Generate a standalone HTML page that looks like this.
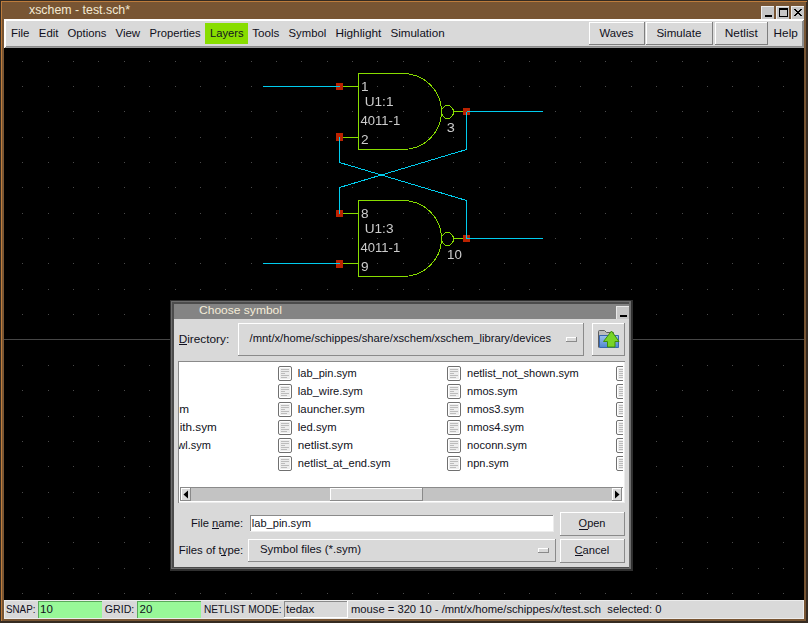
<!DOCTYPE html>
<html><head><meta charset="utf-8"><style>
html,body{margin:0;padding:0;background:#000;overflow:hidden}
svg{display:block}
text{font-family:"Liberation Sans",sans-serif;white-space:pre}
</style></head><body>
<svg width="808" height="623" viewBox="0 0 808 623">
<rect x="0" y="0" width="808" height="623" fill="#352b22" />
<rect x="1" y="1" width="806" height="620" fill="#bd7c3c" />
<rect x="2" y="2" width="804" height="619" fill="#785533" />
<rect x="806" y="2" width="2" height="621" fill="#352b22" />
<rect x="2" y="621" width="806" height="2" fill="#352b22" />
<text x="29" y="14" font-size="12.2" fill="#f3ead3" textLength="101" lengthAdjust="spacingAndGlyphs" >xschem - test.sch*</text>
<rect x="761" y="6" width="13" height="13" fill="#ececec" />
<rect x="762" y="7" width="12" height="12" fill="#c6c6c6" />
<rect x="776" y="6" width="13" height="13" fill="#ececec" />
<rect x="777" y="7" width="12" height="12" fill="#c6c6c6" />
<rect x="791" y="6" width="13" height="13" fill="#ececec" />
<rect x="792" y="7" width="12" height="12" fill="#c6c6c6" />
<rect x="765" y="15" width="7" height="2" fill="#000" />
<rect x="779" y="8" width="9" height="9" fill="#000" />
<rect x="780" y="10" width="7" height="6" fill="#c6c6c6" />
<path d="M794 9h2v1h-2zM800 9h2v1h-2zM795 10h2v1h-2zM799 10h2v1h-2zM796 11h2v1h-2zM798 11h2v1h-2zM797 12h2v1h-2zM796 13h2v1h-2zM798 13h2v1h-2zM795 14h2v1h-2zM799 14h2v1h-2zM794 15h2v1h-2zM800 15h2v1h-2z" fill="#000"/>
<rect x="4" y="19" width="800" height="29" fill="#8c8c8c" />
<path d="M4 19 H804 L802 21 H6 V46 L4 48 Z" fill="#ffffff" shape-rendering="crispEdges"/>
<rect x="6" y="21" width="796" height="25" fill="#d9d9d9" />
<rect x="6" y="47" width="798" height="1" fill="#9a9a9a" />
<rect x="205" y="23" width="43" height="21" fill="#88dd00" />
<rect x="589" y="22" width="56" height="23" fill="#7e7e7e" />
<rect x="589" y="22" width="55" height="22" fill="#ffffff" />
<rect x="590" y="23" width="54" height="21" fill="#d9d9d9" />
<rect x="646" y="22" width="67" height="23" fill="#7e7e7e" />
<rect x="646" y="22" width="66" height="22" fill="#ffffff" />
<rect x="647" y="23" width="65" height="21" fill="#d9d9d9" />
<rect x="715" y="22" width="53" height="23" fill="#7e7e7e" />
<rect x="715" y="22" width="52" height="22" fill="#ffffff" />
<rect x="716" y="23" width="51" height="21" fill="#d9d9d9" />
<text x="10.9" y="37" font-size="11.2" fill="#101020" textLength="18.5" lengthAdjust="spacingAndGlyphs" >File</text>
<text x="38.8" y="37" font-size="11.2" fill="#101020" textLength="19.7" lengthAdjust="spacingAndGlyphs" >Edit</text>
<text x="67.5" y="37" font-size="11.2" fill="#101020" textLength="38.9" lengthAdjust="spacingAndGlyphs" >Options</text>
<text x="115.4" y="37" font-size="11.2" fill="#101020" textLength="24.8" lengthAdjust="spacingAndGlyphs" >View</text>
<text x="149.6" y="37" font-size="11.2" fill="#101020" textLength="51.1" lengthAdjust="spacingAndGlyphs" >Properties</text>
<text x="210.0" y="37" font-size="11.2" fill="#101020" textLength="33.6" lengthAdjust="spacingAndGlyphs" >Layers</text>
<text x="252.2" y="37" font-size="11.2" fill="#101020" textLength="27.2" lengthAdjust="spacingAndGlyphs" >Tools</text>
<text x="288.6" y="37" font-size="11.2" fill="#101020" textLength="37.6" lengthAdjust="spacingAndGlyphs" >Symbol</text>
<text x="335.4" y="37" font-size="11.2" fill="#101020" textLength="45.9" lengthAdjust="spacingAndGlyphs" >Highlight</text>
<text x="390.4" y="37" font-size="11.2" fill="#101020" textLength="54.2" lengthAdjust="spacingAndGlyphs" >Simulation</text>
<text x="773.6" y="37" font-size="11.2" fill="#101020" textLength="24.2" lengthAdjust="spacingAndGlyphs" >Help</text>
<text x="599.4" y="37" font-size="11.2" fill="#101020" textLength="34.1" lengthAdjust="spacingAndGlyphs" >Waves</text>
<text x="656.4" y="37" font-size="11.2" fill="#101020" textLength="45.0" lengthAdjust="spacingAndGlyphs" >Simulate</text>
<text x="724.8" y="37" font-size="11.2" fill="#101020" textLength="33.0" lengthAdjust="spacingAndGlyphs" >Netlist</text>
<rect x="4" y="48" width="800" height="552" fill="#000" />
<path d="M22 61h1v1h-1zM22 86h1v1h-1zM22 111h1v1h-1zM22 137h1v1h-1zM22 162h1v1h-1zM22 187h1v1h-1zM22 213h1v1h-1zM22 238h1v1h-1zM22 263h1v1h-1zM22 289h1v1h-1zM22 314h1v1h-1zM22 339h1v1h-1zM22 365h1v1h-1zM22 390h1v1h-1zM22 416h1v1h-1zM22 441h1v1h-1zM22 466h1v1h-1zM22 492h1v1h-1zM22 517h1v1h-1zM22 542h1v1h-1zM22 568h1v1h-1zM22 593h1v1h-1zM48 61h1v1h-1zM48 86h1v1h-1zM48 111h1v1h-1zM48 137h1v1h-1zM48 162h1v1h-1zM48 187h1v1h-1zM48 213h1v1h-1zM48 238h1v1h-1zM48 263h1v1h-1zM48 289h1v1h-1zM48 314h1v1h-1zM48 339h1v1h-1zM48 365h1v1h-1zM48 390h1v1h-1zM48 416h1v1h-1zM48 441h1v1h-1zM48 466h1v1h-1zM48 492h1v1h-1zM48 517h1v1h-1zM48 542h1v1h-1zM48 568h1v1h-1zM48 593h1v1h-1zM73 61h1v1h-1zM73 86h1v1h-1zM73 111h1v1h-1zM73 137h1v1h-1zM73 162h1v1h-1zM73 187h1v1h-1zM73 213h1v1h-1zM73 238h1v1h-1zM73 263h1v1h-1zM73 289h1v1h-1zM73 314h1v1h-1zM73 339h1v1h-1zM73 365h1v1h-1zM73 390h1v1h-1zM73 416h1v1h-1zM73 441h1v1h-1zM73 466h1v1h-1zM73 492h1v1h-1zM73 517h1v1h-1zM73 542h1v1h-1zM73 568h1v1h-1zM73 593h1v1h-1zM98 61h1v1h-1zM98 86h1v1h-1zM98 111h1v1h-1zM98 137h1v1h-1zM98 162h1v1h-1zM98 187h1v1h-1zM98 213h1v1h-1zM98 238h1v1h-1zM98 263h1v1h-1zM98 289h1v1h-1zM98 314h1v1h-1zM98 339h1v1h-1zM98 365h1v1h-1zM98 390h1v1h-1zM98 416h1v1h-1zM98 441h1v1h-1zM98 466h1v1h-1zM98 492h1v1h-1zM98 517h1v1h-1zM98 542h1v1h-1zM98 568h1v1h-1zM98 593h1v1h-1zM124 61h1v1h-1zM124 86h1v1h-1zM124 111h1v1h-1zM124 137h1v1h-1zM124 162h1v1h-1zM124 187h1v1h-1zM124 213h1v1h-1zM124 238h1v1h-1zM124 263h1v1h-1zM124 289h1v1h-1zM124 314h1v1h-1zM124 339h1v1h-1zM124 365h1v1h-1zM124 390h1v1h-1zM124 416h1v1h-1zM124 441h1v1h-1zM124 466h1v1h-1zM124 492h1v1h-1zM124 517h1v1h-1zM124 542h1v1h-1zM124 568h1v1h-1zM124 593h1v1h-1zM149 61h1v1h-1zM149 86h1v1h-1zM149 111h1v1h-1zM149 137h1v1h-1zM149 162h1v1h-1zM149 187h1v1h-1zM149 213h1v1h-1zM149 238h1v1h-1zM149 263h1v1h-1zM149 289h1v1h-1zM149 314h1v1h-1zM149 339h1v1h-1zM149 365h1v1h-1zM149 390h1v1h-1zM149 416h1v1h-1zM149 441h1v1h-1zM149 466h1v1h-1zM149 492h1v1h-1zM149 517h1v1h-1zM149 542h1v1h-1zM149 568h1v1h-1zM149 593h1v1h-1zM175 61h1v1h-1zM175 86h1v1h-1zM175 111h1v1h-1zM175 137h1v1h-1zM175 162h1v1h-1zM175 187h1v1h-1zM175 213h1v1h-1zM175 238h1v1h-1zM175 263h1v1h-1zM175 289h1v1h-1zM175 314h1v1h-1zM175 339h1v1h-1zM175 365h1v1h-1zM175 390h1v1h-1zM175 416h1v1h-1zM175 441h1v1h-1zM175 466h1v1h-1zM175 492h1v1h-1zM175 517h1v1h-1zM175 542h1v1h-1zM175 568h1v1h-1zM175 593h1v1h-1zM200 61h1v1h-1zM200 86h1v1h-1zM200 111h1v1h-1zM200 137h1v1h-1zM200 162h1v1h-1zM200 187h1v1h-1zM200 213h1v1h-1zM200 238h1v1h-1zM200 263h1v1h-1zM200 289h1v1h-1zM200 314h1v1h-1zM200 339h1v1h-1zM200 365h1v1h-1zM200 390h1v1h-1zM200 416h1v1h-1zM200 441h1v1h-1zM200 466h1v1h-1zM200 492h1v1h-1zM200 517h1v1h-1zM200 542h1v1h-1zM200 568h1v1h-1zM200 593h1v1h-1zM225 61h1v1h-1zM225 86h1v1h-1zM225 111h1v1h-1zM225 137h1v1h-1zM225 162h1v1h-1zM225 187h1v1h-1zM225 213h1v1h-1zM225 238h1v1h-1zM225 263h1v1h-1zM225 289h1v1h-1zM225 314h1v1h-1zM225 339h1v1h-1zM225 365h1v1h-1zM225 390h1v1h-1zM225 416h1v1h-1zM225 441h1v1h-1zM225 466h1v1h-1zM225 492h1v1h-1zM225 517h1v1h-1zM225 542h1v1h-1zM225 568h1v1h-1zM225 593h1v1h-1zM251 61h1v1h-1zM251 86h1v1h-1zM251 111h1v1h-1zM251 137h1v1h-1zM251 162h1v1h-1zM251 187h1v1h-1zM251 213h1v1h-1zM251 238h1v1h-1zM251 263h1v1h-1zM251 289h1v1h-1zM251 314h1v1h-1zM251 339h1v1h-1zM251 365h1v1h-1zM251 390h1v1h-1zM251 416h1v1h-1zM251 441h1v1h-1zM251 466h1v1h-1zM251 492h1v1h-1zM251 517h1v1h-1zM251 542h1v1h-1zM251 568h1v1h-1zM251 593h1v1h-1zM276 61h1v1h-1zM276 86h1v1h-1zM276 111h1v1h-1zM276 137h1v1h-1zM276 162h1v1h-1zM276 187h1v1h-1zM276 213h1v1h-1zM276 238h1v1h-1zM276 263h1v1h-1zM276 289h1v1h-1zM276 314h1v1h-1zM276 339h1v1h-1zM276 365h1v1h-1zM276 390h1v1h-1zM276 416h1v1h-1zM276 441h1v1h-1zM276 466h1v1h-1zM276 492h1v1h-1zM276 517h1v1h-1zM276 542h1v1h-1zM276 568h1v1h-1zM276 593h1v1h-1zM301 61h1v1h-1zM301 86h1v1h-1zM301 111h1v1h-1zM301 137h1v1h-1zM301 162h1v1h-1zM301 187h1v1h-1zM301 213h1v1h-1zM301 238h1v1h-1zM301 263h1v1h-1zM301 289h1v1h-1zM301 314h1v1h-1zM301 339h1v1h-1zM301 365h1v1h-1zM301 390h1v1h-1zM301 416h1v1h-1zM301 441h1v1h-1zM301 466h1v1h-1zM301 492h1v1h-1zM301 517h1v1h-1zM301 542h1v1h-1zM301 568h1v1h-1zM301 593h1v1h-1zM327 61h1v1h-1zM327 86h1v1h-1zM327 111h1v1h-1zM327 137h1v1h-1zM327 162h1v1h-1zM327 187h1v1h-1zM327 213h1v1h-1zM327 238h1v1h-1zM327 263h1v1h-1zM327 289h1v1h-1zM327 314h1v1h-1zM327 339h1v1h-1zM327 365h1v1h-1zM327 390h1v1h-1zM327 416h1v1h-1zM327 441h1v1h-1zM327 466h1v1h-1zM327 492h1v1h-1zM327 517h1v1h-1zM327 542h1v1h-1zM327 568h1v1h-1zM327 593h1v1h-1zM352 61h1v1h-1zM352 86h1v1h-1zM352 111h1v1h-1zM352 137h1v1h-1zM352 162h1v1h-1zM352 187h1v1h-1zM352 213h1v1h-1zM352 238h1v1h-1zM352 263h1v1h-1zM352 289h1v1h-1zM352 314h1v1h-1zM352 339h1v1h-1zM352 365h1v1h-1zM352 390h1v1h-1zM352 416h1v1h-1zM352 441h1v1h-1zM352 466h1v1h-1zM352 492h1v1h-1zM352 517h1v1h-1zM352 542h1v1h-1zM352 568h1v1h-1zM352 593h1v1h-1zM377 61h1v1h-1zM377 86h1v1h-1zM377 111h1v1h-1zM377 137h1v1h-1zM377 162h1v1h-1zM377 187h1v1h-1zM377 213h1v1h-1zM377 238h1v1h-1zM377 263h1v1h-1zM377 289h1v1h-1zM377 314h1v1h-1zM377 339h1v1h-1zM377 365h1v1h-1zM377 390h1v1h-1zM377 416h1v1h-1zM377 441h1v1h-1zM377 466h1v1h-1zM377 492h1v1h-1zM377 517h1v1h-1zM377 542h1v1h-1zM377 568h1v1h-1zM377 593h1v1h-1zM403 61h1v1h-1zM403 86h1v1h-1zM403 111h1v1h-1zM403 137h1v1h-1zM403 162h1v1h-1zM403 187h1v1h-1zM403 213h1v1h-1zM403 238h1v1h-1zM403 263h1v1h-1zM403 289h1v1h-1zM403 314h1v1h-1zM403 339h1v1h-1zM403 365h1v1h-1zM403 390h1v1h-1zM403 416h1v1h-1zM403 441h1v1h-1zM403 466h1v1h-1zM403 492h1v1h-1zM403 517h1v1h-1zM403 542h1v1h-1zM403 568h1v1h-1zM403 593h1v1h-1zM428 61h1v1h-1zM428 86h1v1h-1zM428 111h1v1h-1zM428 137h1v1h-1zM428 162h1v1h-1zM428 187h1v1h-1zM428 213h1v1h-1zM428 238h1v1h-1zM428 263h1v1h-1zM428 289h1v1h-1zM428 314h1v1h-1zM428 339h1v1h-1zM428 365h1v1h-1zM428 390h1v1h-1zM428 416h1v1h-1zM428 441h1v1h-1zM428 466h1v1h-1zM428 492h1v1h-1zM428 517h1v1h-1zM428 542h1v1h-1zM428 568h1v1h-1zM428 593h1v1h-1zM453 61h1v1h-1zM453 86h1v1h-1zM453 111h1v1h-1zM453 137h1v1h-1zM453 162h1v1h-1zM453 187h1v1h-1zM453 213h1v1h-1zM453 238h1v1h-1zM453 263h1v1h-1zM453 289h1v1h-1zM453 314h1v1h-1zM453 339h1v1h-1zM453 365h1v1h-1zM453 390h1v1h-1zM453 416h1v1h-1zM453 441h1v1h-1zM453 466h1v1h-1zM453 492h1v1h-1zM453 517h1v1h-1zM453 542h1v1h-1zM453 568h1v1h-1zM453 593h1v1h-1zM479 61h1v1h-1zM479 86h1v1h-1zM479 111h1v1h-1zM479 137h1v1h-1zM479 162h1v1h-1zM479 187h1v1h-1zM479 213h1v1h-1zM479 238h1v1h-1zM479 263h1v1h-1zM479 289h1v1h-1zM479 314h1v1h-1zM479 339h1v1h-1zM479 365h1v1h-1zM479 390h1v1h-1zM479 416h1v1h-1zM479 441h1v1h-1zM479 466h1v1h-1zM479 492h1v1h-1zM479 517h1v1h-1zM479 542h1v1h-1zM479 568h1v1h-1zM479 593h1v1h-1zM504 61h1v1h-1zM504 86h1v1h-1zM504 111h1v1h-1zM504 137h1v1h-1zM504 162h1v1h-1zM504 187h1v1h-1zM504 213h1v1h-1zM504 238h1v1h-1zM504 263h1v1h-1zM504 289h1v1h-1zM504 314h1v1h-1zM504 339h1v1h-1zM504 365h1v1h-1zM504 390h1v1h-1zM504 416h1v1h-1zM504 441h1v1h-1zM504 466h1v1h-1zM504 492h1v1h-1zM504 517h1v1h-1zM504 542h1v1h-1zM504 568h1v1h-1zM504 593h1v1h-1zM529 61h1v1h-1zM529 86h1v1h-1zM529 111h1v1h-1zM529 137h1v1h-1zM529 162h1v1h-1zM529 187h1v1h-1zM529 213h1v1h-1zM529 238h1v1h-1zM529 263h1v1h-1zM529 289h1v1h-1zM529 314h1v1h-1zM529 339h1v1h-1zM529 365h1v1h-1zM529 390h1v1h-1zM529 416h1v1h-1zM529 441h1v1h-1zM529 466h1v1h-1zM529 492h1v1h-1zM529 517h1v1h-1zM529 542h1v1h-1zM529 568h1v1h-1zM529 593h1v1h-1zM555 61h1v1h-1zM555 86h1v1h-1zM555 111h1v1h-1zM555 137h1v1h-1zM555 162h1v1h-1zM555 187h1v1h-1zM555 213h1v1h-1zM555 238h1v1h-1zM555 263h1v1h-1zM555 289h1v1h-1zM555 314h1v1h-1zM555 339h1v1h-1zM555 365h1v1h-1zM555 390h1v1h-1zM555 416h1v1h-1zM555 441h1v1h-1zM555 466h1v1h-1zM555 492h1v1h-1zM555 517h1v1h-1zM555 542h1v1h-1zM555 568h1v1h-1zM555 593h1v1h-1zM580 61h1v1h-1zM580 86h1v1h-1zM580 111h1v1h-1zM580 137h1v1h-1zM580 162h1v1h-1zM580 187h1v1h-1zM580 213h1v1h-1zM580 238h1v1h-1zM580 263h1v1h-1zM580 289h1v1h-1zM580 314h1v1h-1zM580 339h1v1h-1zM580 365h1v1h-1zM580 390h1v1h-1zM580 416h1v1h-1zM580 441h1v1h-1zM580 466h1v1h-1zM580 492h1v1h-1zM580 517h1v1h-1zM580 542h1v1h-1zM580 568h1v1h-1zM580 593h1v1h-1zM605 61h1v1h-1zM605 86h1v1h-1zM605 111h1v1h-1zM605 137h1v1h-1zM605 162h1v1h-1zM605 187h1v1h-1zM605 213h1v1h-1zM605 238h1v1h-1zM605 263h1v1h-1zM605 289h1v1h-1zM605 314h1v1h-1zM605 339h1v1h-1zM605 365h1v1h-1zM605 390h1v1h-1zM605 416h1v1h-1zM605 441h1v1h-1zM605 466h1v1h-1zM605 492h1v1h-1zM605 517h1v1h-1zM605 542h1v1h-1zM605 568h1v1h-1zM605 593h1v1h-1zM631 61h1v1h-1zM631 86h1v1h-1zM631 111h1v1h-1zM631 137h1v1h-1zM631 162h1v1h-1zM631 187h1v1h-1zM631 213h1v1h-1zM631 238h1v1h-1zM631 263h1v1h-1zM631 289h1v1h-1zM631 314h1v1h-1zM631 339h1v1h-1zM631 365h1v1h-1zM631 390h1v1h-1zM631 416h1v1h-1zM631 441h1v1h-1zM631 466h1v1h-1zM631 492h1v1h-1zM631 517h1v1h-1zM631 542h1v1h-1zM631 568h1v1h-1zM631 593h1v1h-1zM656 61h1v1h-1zM656 86h1v1h-1zM656 111h1v1h-1zM656 137h1v1h-1zM656 162h1v1h-1zM656 187h1v1h-1zM656 213h1v1h-1zM656 238h1v1h-1zM656 263h1v1h-1zM656 289h1v1h-1zM656 314h1v1h-1zM656 339h1v1h-1zM656 365h1v1h-1zM656 390h1v1h-1zM656 416h1v1h-1zM656 441h1v1h-1zM656 466h1v1h-1zM656 492h1v1h-1zM656 517h1v1h-1zM656 542h1v1h-1zM656 568h1v1h-1zM656 593h1v1h-1zM682 61h1v1h-1zM682 86h1v1h-1zM682 111h1v1h-1zM682 137h1v1h-1zM682 162h1v1h-1zM682 187h1v1h-1zM682 213h1v1h-1zM682 238h1v1h-1zM682 263h1v1h-1zM682 289h1v1h-1zM682 314h1v1h-1zM682 339h1v1h-1zM682 365h1v1h-1zM682 390h1v1h-1zM682 416h1v1h-1zM682 441h1v1h-1zM682 466h1v1h-1zM682 492h1v1h-1zM682 517h1v1h-1zM682 542h1v1h-1zM682 568h1v1h-1zM682 593h1v1h-1zM707 61h1v1h-1zM707 86h1v1h-1zM707 111h1v1h-1zM707 137h1v1h-1zM707 162h1v1h-1zM707 187h1v1h-1zM707 213h1v1h-1zM707 238h1v1h-1zM707 263h1v1h-1zM707 289h1v1h-1zM707 314h1v1h-1zM707 339h1v1h-1zM707 365h1v1h-1zM707 390h1v1h-1zM707 416h1v1h-1zM707 441h1v1h-1zM707 466h1v1h-1zM707 492h1v1h-1zM707 517h1v1h-1zM707 542h1v1h-1zM707 568h1v1h-1zM707 593h1v1h-1zM732 61h1v1h-1zM732 86h1v1h-1zM732 111h1v1h-1zM732 137h1v1h-1zM732 162h1v1h-1zM732 187h1v1h-1zM732 213h1v1h-1zM732 238h1v1h-1zM732 263h1v1h-1zM732 289h1v1h-1zM732 314h1v1h-1zM732 339h1v1h-1zM732 365h1v1h-1zM732 390h1v1h-1zM732 416h1v1h-1zM732 441h1v1h-1zM732 466h1v1h-1zM732 492h1v1h-1zM732 517h1v1h-1zM732 542h1v1h-1zM732 568h1v1h-1zM732 593h1v1h-1zM758 61h1v1h-1zM758 86h1v1h-1zM758 111h1v1h-1zM758 137h1v1h-1zM758 162h1v1h-1zM758 187h1v1h-1zM758 213h1v1h-1zM758 238h1v1h-1zM758 263h1v1h-1zM758 289h1v1h-1zM758 314h1v1h-1zM758 339h1v1h-1zM758 365h1v1h-1zM758 390h1v1h-1zM758 416h1v1h-1zM758 441h1v1h-1zM758 466h1v1h-1zM758 492h1v1h-1zM758 517h1v1h-1zM758 542h1v1h-1zM758 568h1v1h-1zM758 593h1v1h-1zM783 61h1v1h-1zM783 86h1v1h-1zM783 111h1v1h-1zM783 137h1v1h-1zM783 162h1v1h-1zM783 187h1v1h-1zM783 213h1v1h-1zM783 238h1v1h-1zM783 263h1v1h-1zM783 289h1v1h-1zM783 314h1v1h-1zM783 339h1v1h-1zM783 365h1v1h-1zM783 390h1v1h-1zM783 416h1v1h-1zM783 441h1v1h-1zM783 466h1v1h-1zM783 492h1v1h-1zM783 517h1v1h-1zM783 542h1v1h-1zM783 568h1v1h-1zM783 593h1v1h-1z" fill="#4a4a4a"/>
<rect x="4" y="339" width="800" height="1" fill="#464646" />
<path d="M358.5 73.5 H403 A38.5 38 0 0 1 403 149.5 H358.5 Z" stroke="#88dd00" stroke-width="1" fill="none" shape-rendering="crispEdges"/>
<ellipse cx="447.5" cy="112" rx="6" ry="6.5" stroke="#88dd00" stroke-width="1" fill="none" shape-rendering="crispEdges"/>
<path d="M340 86.5 H358.5 M340 137.5 H358.5 M453.7 111.5 H466" stroke="#88dd00" stroke-width="1" fill="none" shape-rendering="crispEdges"/>
<path d="M358.5 200.5 H403 A38.5 38 0 0 1 403 276.5 H358.5 Z" stroke="#88dd00" stroke-width="1" fill="none" shape-rendering="crispEdges"/>
<ellipse cx="447.5" cy="239" rx="6" ry="6.5" stroke="#88dd00" stroke-width="1" fill="none" shape-rendering="crispEdges"/>
<path d="M340 213.5 H358.5 M340 263.5 H358.5 M453.7 238.5 H466" stroke="#88dd00" stroke-width="1" fill="none" shape-rendering="crispEdges"/>
<rect x="336" y="83" width="7" height="7" fill="#bb2200" />
<rect x="336" y="133" width="7" height="8" fill="#bb2200" />
<rect x="463" y="108" width="7" height="7" fill="#bb2200" />
<rect x="336" y="210" width="7" height="7" fill="#bb2200" />
<rect x="336" y="260" width="7" height="8" fill="#bb2200" />
<rect x="463" y="235" width="7" height="7" fill="#bb2200" />
<path d="M263 86.5 H339.5 M466.5 111.5 H542.5 M263 263.5 H339.5 M466.5 238.5 H542.5" stroke="#00ccee" stroke-width="1" fill="none" shape-rendering="crispEdges"/>
<path d="M339.5 136.5 V162.5 L466.5 200.5 V238.5 M466.5 111.5 V149.5 L339.5 187.5 V213.5" stroke="#00ccee" stroke-width="1" fill="none" shape-rendering="crispEdges"/>
<defs><filter id="gs"><feOffset dx="0" dy="0"/></filter></defs><g filter="url(#gs)">
<text x="361.0" y="90.7" font-size="12.4" fill="#cccccc" textLength="7.6" lengthAdjust="spacingAndGlyphs" >1</text>
<text x="364.7" y="105.9" font-size="12.4" fill="#cccccc" textLength="28.8" lengthAdjust="spacingAndGlyphs" >U1:1</text>
<text x="360.5" y="125.2" font-size="12.4" fill="#cccccc" textLength="39.7" lengthAdjust="spacingAndGlyphs" >4011-1</text>
<text x="361.0" y="144" font-size="12.4" fill="#cccccc" textLength="7.6" lengthAdjust="spacingAndGlyphs" >2</text>
<text x="361.0" y="217.7" font-size="12.4" fill="#cccccc" textLength="7.6" lengthAdjust="spacingAndGlyphs" >8</text>
<text x="364.7" y="232.9" font-size="12.4" fill="#cccccc" textLength="28.8" lengthAdjust="spacingAndGlyphs" >U1:3</text>
<text x="360.5" y="252.2" font-size="12.4" fill="#cccccc" textLength="39.7" lengthAdjust="spacingAndGlyphs" >4011-1</text>
<text x="361.0" y="271" font-size="12.4" fill="#cccccc" textLength="7.6" lengthAdjust="spacingAndGlyphs" >9</text>
<text x="446.7" y="131.9" font-size="12.4" fill="#cccccc" textLength="8.1" lengthAdjust="spacingAndGlyphs" >3</text>
<text x="447.0" y="259.1" font-size="12.4" fill="#cccccc" textLength="14.8" lengthAdjust="spacingAndGlyphs" >10</text>
</g>
<rect x="170" y="300" width="463" height="271" fill="#303030" />
<rect x="171" y="301" width="460" height="268" fill="#6e6e6e" />
<rect x="172" y="302" width="457" height="266" fill="#4c4c4c" />
<rect x="174" y="304" width="455" height="15" fill="#848484" />
<rect x="174" y="319" width="455" height="248" fill="#d9d9d9" />
<text x="199" y="314" font-size="11.4" fill="#f4ecd8" textLength="83" lengthAdjust="spacingAndGlyphs" >Choose symbol</text>
<rect x="616" y="306" width="13" height="13" fill="#e8e8e8" />
<rect x="617" y="307" width="12" height="12" fill="#c6c6c6" />
<rect x="620" y="315" width="7" height="2" fill="#000" />
<text x="178.7" y="342.5" font-size="11.2" fill="#101020" textLength="50.5" lengthAdjust="spacingAndGlyphs" >Directory:</text>
<rect x="179" y="344" width="8" height="1" fill="#101020" />
<rect x="238" y="323" width="346" height="33" fill="#8a8a8a" />
<rect x="238" y="323" width="345" height="32" fill="#ffffff" />
<rect x="239" y="324" width="344" height="31" fill="#d9d9d9" />
<text x="249.6" y="342.4" font-size="11.2" fill="#101020" textLength="301.5" lengthAdjust="spacingAndGlyphs" >/mnt/x/home/schippes/share/xschem/xschem_library/devices</text>
<rect x="566" y="337" width="11" height="5" fill="#8a8a8a" />
<rect x="566" y="337" width="10" height="4" fill="#ffffff" />
<rect x="567" y="338" width="9" height="3" fill="#d9d9d9" />
<rect x="592" y="323" width="33" height="33" fill="#8a8a8a" />
<rect x="592" y="323" width="32" height="32" fill="#ffffff" />
<rect x="593" y="324" width="31" height="31" fill="#d9d9d9" />
<path d="M598.5 347.5 V331.5 Q598.5 330.5 599.5 330.5 H604.5 L606.5 332.5 H613.5 V336 H598.5" fill="#bcbcbc" stroke="#5e5e5e" stroke-width="1"/>
<defs><linearGradient id="fg" x1="0" y1="0" x2="0" y2="1"><stop offset="0" stop-color="#9cc0ec"/><stop offset="1" stop-color="#4f86cf"/></linearGradient></defs>
<path d="M599.5 335.5 H618.5 V347.5 H599.5 Z" fill="url(#fg)" stroke="#3767b0" stroke-width="1"/>
<path d="M611.5 331 L619 341.5 H615 V347 H607.5 V341.5 H603.5 Z" fill="#78d428" stroke="#3f8f0a" stroke-width="1" stroke-linejoin="round"/>
<rect x="178" y="361" width="447" height="142" fill="#8a8a8a" />
<rect x="179" y="362" width="446" height="141" fill="#ececec" />
<rect x="179" y="362" width="445" height="140" fill="#ffffff" />
<rect x="180" y="487" width="443" height="1" fill="#8a8a8a" />
<rect x="180" y="487" width="1" height="14" fill="#8a8a8a" />
<rect x="181" y="488" width="431" height="13" fill="#c3c3c3" />
<rect x="181" y="488" width="10" height="13" fill="#8a8a8a" />
<rect x="181" y="488" width="9" height="12" fill="#ffffff" />
<rect x="182" y="489" width="8" height="11" fill="#d9d9d9" />
<path d="M183.5 494.5 L188 490.5 V498.5 Z" fill="#000"/>
<rect x="612" y="488" width="10" height="13" fill="#8a8a8a" />
<rect x="612" y="488" width="9" height="12" fill="#ffffff" />
<rect x="613" y="489" width="8" height="11" fill="#d9d9d9" />
<path d="M619.5 494.5 L615 490.5 V498.5 Z" fill="#000"/>
<rect x="330" y="488" width="93" height="13" fill="#8a8a8a" />
<rect x="330" y="488" width="92" height="12" fill="#ffffff" />
<rect x="331" y="489" width="91" height="11" fill="#d9d9d9" />
<clipPath id="lb"><rect x="179" y="362" width="444" height="125"/></clipPath>
<g clip-path="url(#lb)">
<rect x="278.5" y="366.5" width="13" height="14" rx="1.5" fill="#ffffff" stroke="#707070" stroke-width="1"/>
<rect x="280" y="368" width="10" height="11" fill="#ededed" />
<rect x="281" y="369" width="8" height="1" fill="#bcbcbc" />
<rect x="281" y="371" width="8" height="1" fill="#bcbcbc" />
<rect x="281" y="373" width="4" height="1" fill="#bcbcbc" />
<rect x="281" y="375" width="8" height="1" fill="#bcbcbc" />
<rect x="281" y="377" width="6" height="1" fill="#bcbcbc" />
<rect x="447.5" y="366.5" width="13" height="14" rx="1.5" fill="#ffffff" stroke="#707070" stroke-width="1"/>
<rect x="449" y="368" width="10" height="11" fill="#ededed" />
<rect x="450" y="369" width="8" height="1" fill="#bcbcbc" />
<rect x="450" y="371" width="8" height="1" fill="#bcbcbc" />
<rect x="450" y="373" width="4" height="1" fill="#bcbcbc" />
<rect x="450" y="375" width="8" height="1" fill="#bcbcbc" />
<rect x="450" y="377" width="6" height="1" fill="#bcbcbc" />
<rect x="616.5" y="366.5" width="13" height="14" rx="1.5" fill="#ffffff" stroke="#707070" stroke-width="1"/>
<rect x="618" y="368" width="10" height="11" fill="#ededed" />
<rect x="619" y="369" width="8" height="1" fill="#bcbcbc" />
<rect x="619" y="371" width="8" height="1" fill="#bcbcbc" />
<rect x="619" y="373" width="4" height="1" fill="#bcbcbc" />
<rect x="619" y="375" width="8" height="1" fill="#bcbcbc" />
<rect x="619" y="377" width="6" height="1" fill="#bcbcbc" />
<text x="297.8" y="376.9" font-size="11.2" fill="#101020" textLength="59.0" lengthAdjust="spacingAndGlyphs" >lab_pin.sym</text>
<text x="467" y="376.9" font-size="11.2" fill="#101020" textLength="111.8" lengthAdjust="spacingAndGlyphs" >netlist_not_shown.sym</text>
<rect x="278.5" y="384.5" width="13" height="14" rx="1.5" fill="#ffffff" stroke="#707070" stroke-width="1"/>
<rect x="280" y="386" width="10" height="11" fill="#ededed" />
<rect x="281" y="387" width="8" height="1" fill="#bcbcbc" />
<rect x="281" y="389" width="8" height="1" fill="#bcbcbc" />
<rect x="281" y="391" width="4" height="1" fill="#bcbcbc" />
<rect x="281" y="393" width="8" height="1" fill="#bcbcbc" />
<rect x="281" y="395" width="6" height="1" fill="#bcbcbc" />
<rect x="447.5" y="384.5" width="13" height="14" rx="1.5" fill="#ffffff" stroke="#707070" stroke-width="1"/>
<rect x="449" y="386" width="10" height="11" fill="#ededed" />
<rect x="450" y="387" width="8" height="1" fill="#bcbcbc" />
<rect x="450" y="389" width="8" height="1" fill="#bcbcbc" />
<rect x="450" y="391" width="4" height="1" fill="#bcbcbc" />
<rect x="450" y="393" width="8" height="1" fill="#bcbcbc" />
<rect x="450" y="395" width="6" height="1" fill="#bcbcbc" />
<rect x="616.5" y="384.5" width="13" height="14" rx="1.5" fill="#ffffff" stroke="#707070" stroke-width="1"/>
<rect x="618" y="386" width="10" height="11" fill="#ededed" />
<rect x="619" y="387" width="8" height="1" fill="#bcbcbc" />
<rect x="619" y="389" width="8" height="1" fill="#bcbcbc" />
<rect x="619" y="391" width="4" height="1" fill="#bcbcbc" />
<rect x="619" y="393" width="8" height="1" fill="#bcbcbc" />
<rect x="619" y="395" width="6" height="1" fill="#bcbcbc" />
<text x="297.8" y="394.9" font-size="11.2" fill="#101020" textLength="65.0" lengthAdjust="spacingAndGlyphs" >lab_wire.sym</text>
<text x="467" y="394.9" font-size="11.2" fill="#101020" textLength="50.6" lengthAdjust="spacingAndGlyphs" >nmos.sym</text>
<rect x="278.5" y="402.5" width="13" height="14" rx="1.5" fill="#ffffff" stroke="#707070" stroke-width="1"/>
<rect x="280" y="404" width="10" height="11" fill="#ededed" />
<rect x="281" y="405" width="8" height="1" fill="#bcbcbc" />
<rect x="281" y="407" width="8" height="1" fill="#bcbcbc" />
<rect x="281" y="409" width="4" height="1" fill="#bcbcbc" />
<rect x="281" y="411" width="8" height="1" fill="#bcbcbc" />
<rect x="281" y="413" width="6" height="1" fill="#bcbcbc" />
<rect x="447.5" y="402.5" width="13" height="14" rx="1.5" fill="#ffffff" stroke="#707070" stroke-width="1"/>
<rect x="449" y="404" width="10" height="11" fill="#ededed" />
<rect x="450" y="405" width="8" height="1" fill="#bcbcbc" />
<rect x="450" y="407" width="8" height="1" fill="#bcbcbc" />
<rect x="450" y="409" width="4" height="1" fill="#bcbcbc" />
<rect x="450" y="411" width="8" height="1" fill="#bcbcbc" />
<rect x="450" y="413" width="6" height="1" fill="#bcbcbc" />
<rect x="616.5" y="402.5" width="13" height="14" rx="1.5" fill="#ffffff" stroke="#707070" stroke-width="1"/>
<rect x="618" y="404" width="10" height="11" fill="#ededed" />
<rect x="619" y="405" width="8" height="1" fill="#bcbcbc" />
<rect x="619" y="407" width="8" height="1" fill="#bcbcbc" />
<rect x="619" y="409" width="4" height="1" fill="#bcbcbc" />
<rect x="619" y="411" width="8" height="1" fill="#bcbcbc" />
<rect x="619" y="413" width="6" height="1" fill="#bcbcbc" />
<text x="297.8" y="412.9" font-size="11.2" fill="#101020" textLength="67.0" lengthAdjust="spacingAndGlyphs" >launcher.sym</text>
<text x="467" y="412.9" font-size="11.2" fill="#101020" textLength="57.0" lengthAdjust="spacingAndGlyphs" >nmos3.sym</text>
<rect x="278.5" y="420.5" width="13" height="14" rx="1.5" fill="#ffffff" stroke="#707070" stroke-width="1"/>
<rect x="280" y="422" width="10" height="11" fill="#ededed" />
<rect x="281" y="423" width="8" height="1" fill="#bcbcbc" />
<rect x="281" y="425" width="8" height="1" fill="#bcbcbc" />
<rect x="281" y="427" width="4" height="1" fill="#bcbcbc" />
<rect x="281" y="429" width="8" height="1" fill="#bcbcbc" />
<rect x="281" y="431" width="6" height="1" fill="#bcbcbc" />
<rect x="447.5" y="420.5" width="13" height="14" rx="1.5" fill="#ffffff" stroke="#707070" stroke-width="1"/>
<rect x="449" y="422" width="10" height="11" fill="#ededed" />
<rect x="450" y="423" width="8" height="1" fill="#bcbcbc" />
<rect x="450" y="425" width="8" height="1" fill="#bcbcbc" />
<rect x="450" y="427" width="4" height="1" fill="#bcbcbc" />
<rect x="450" y="429" width="8" height="1" fill="#bcbcbc" />
<rect x="450" y="431" width="6" height="1" fill="#bcbcbc" />
<rect x="616.5" y="420.5" width="13" height="14" rx="1.5" fill="#ffffff" stroke="#707070" stroke-width="1"/>
<rect x="618" y="422" width="10" height="11" fill="#ededed" />
<rect x="619" y="423" width="8" height="1" fill="#bcbcbc" />
<rect x="619" y="425" width="8" height="1" fill="#bcbcbc" />
<rect x="619" y="427" width="4" height="1" fill="#bcbcbc" />
<rect x="619" y="429" width="8" height="1" fill="#bcbcbc" />
<rect x="619" y="431" width="6" height="1" fill="#bcbcbc" />
<text x="297.8" y="430.9" font-size="11.2" fill="#101020" textLength="38.7" lengthAdjust="spacingAndGlyphs" >led.sym</text>
<text x="467" y="430.9" font-size="11.2" fill="#101020" textLength="57.0" lengthAdjust="spacingAndGlyphs" >nmos4.sym</text>
<rect x="278.5" y="438.5" width="13" height="14" rx="1.5" fill="#ffffff" stroke="#707070" stroke-width="1"/>
<rect x="280" y="440" width="10" height="11" fill="#ededed" />
<rect x="281" y="441" width="8" height="1" fill="#bcbcbc" />
<rect x="281" y="443" width="8" height="1" fill="#bcbcbc" />
<rect x="281" y="445" width="4" height="1" fill="#bcbcbc" />
<rect x="281" y="447" width="8" height="1" fill="#bcbcbc" />
<rect x="281" y="449" width="6" height="1" fill="#bcbcbc" />
<rect x="447.5" y="438.5" width="13" height="14" rx="1.5" fill="#ffffff" stroke="#707070" stroke-width="1"/>
<rect x="449" y="440" width="10" height="11" fill="#ededed" />
<rect x="450" y="441" width="8" height="1" fill="#bcbcbc" />
<rect x="450" y="443" width="8" height="1" fill="#bcbcbc" />
<rect x="450" y="445" width="4" height="1" fill="#bcbcbc" />
<rect x="450" y="447" width="8" height="1" fill="#bcbcbc" />
<rect x="450" y="449" width="6" height="1" fill="#bcbcbc" />
<rect x="616.5" y="438.5" width="13" height="14" rx="1.5" fill="#ffffff" stroke="#707070" stroke-width="1"/>
<rect x="618" y="440" width="10" height="11" fill="#ededed" />
<rect x="619" y="441" width="8" height="1" fill="#bcbcbc" />
<rect x="619" y="443" width="8" height="1" fill="#bcbcbc" />
<rect x="619" y="445" width="4" height="1" fill="#bcbcbc" />
<rect x="619" y="447" width="8" height="1" fill="#bcbcbc" />
<rect x="619" y="449" width="6" height="1" fill="#bcbcbc" />
<text x="297.8" y="448.9" font-size="11.2" fill="#101020" textLength="55.1" lengthAdjust="spacingAndGlyphs" >netlist.sym</text>
<text x="467" y="448.9" font-size="11.2" fill="#101020" textLength="60.0" lengthAdjust="spacingAndGlyphs" >noconn.sym</text>
<rect x="278.5" y="456.5" width="13" height="14" rx="1.5" fill="#ffffff" stroke="#707070" stroke-width="1"/>
<rect x="280" y="458" width="10" height="11" fill="#ededed" />
<rect x="281" y="459" width="8" height="1" fill="#bcbcbc" />
<rect x="281" y="461" width="8" height="1" fill="#bcbcbc" />
<rect x="281" y="463" width="4" height="1" fill="#bcbcbc" />
<rect x="281" y="465" width="8" height="1" fill="#bcbcbc" />
<rect x="281" y="467" width="6" height="1" fill="#bcbcbc" />
<rect x="447.5" y="456.5" width="13" height="14" rx="1.5" fill="#ffffff" stroke="#707070" stroke-width="1"/>
<rect x="449" y="458" width="10" height="11" fill="#ededed" />
<rect x="450" y="459" width="8" height="1" fill="#bcbcbc" />
<rect x="450" y="461" width="8" height="1" fill="#bcbcbc" />
<rect x="450" y="463" width="4" height="1" fill="#bcbcbc" />
<rect x="450" y="465" width="8" height="1" fill="#bcbcbc" />
<rect x="450" y="467" width="6" height="1" fill="#bcbcbc" />
<rect x="616.5" y="456.5" width="13" height="14" rx="1.5" fill="#ffffff" stroke="#707070" stroke-width="1"/>
<rect x="618" y="458" width="10" height="11" fill="#ededed" />
<rect x="619" y="459" width="8" height="1" fill="#bcbcbc" />
<rect x="619" y="461" width="8" height="1" fill="#bcbcbc" />
<rect x="619" y="463" width="4" height="1" fill="#bcbcbc" />
<rect x="619" y="465" width="8" height="1" fill="#bcbcbc" />
<rect x="619" y="467" width="6" height="1" fill="#bcbcbc" />
<text x="297.8" y="466.9" font-size="11.2" fill="#101020" textLength="92.7" lengthAdjust="spacingAndGlyphs" >netlist_at_end.sym</text>
<text x="467" y="466.9" font-size="11.2" fill="#101020" textLength="41.7" lengthAdjust="spacingAndGlyphs" >npn.sym</text>
<text x="179.2" y="412.9" font-size="11.2" fill="#101020" textLength="9.8" lengthAdjust="spacingAndGlyphs" >m</text>
<text x="179.7" y="430.9" font-size="11.2" fill="#101020" textLength="37.1" lengthAdjust="spacingAndGlyphs" >ith.sym</text>
<text x="177.3" y="448.9" font-size="11.2" fill="#101020" textLength="33.6" lengthAdjust="spacingAndGlyphs" >wl.sym</text>
</g>
<text x="190.9" y="526.5" font-size="11.2" fill="#101020" textLength="52.3" lengthAdjust="spacingAndGlyphs" >File name:</text>
<rect x="212" y="528" width="7" height="1" fill="#101020" />
<rect x="250" y="515" width="304" height="17" fill="#ececec" />
<rect x="250" y="515" width="303" height="16" fill="#8a8a8a" />
<rect x="251" y="516" width="302" height="15" fill="#ffffff" />
<text x="251.8" y="526.7" font-size="11.2" fill="#101020" textLength="59.1" lengthAdjust="spacingAndGlyphs" >lab_pin.sym</text>
<rect x="560" y="512" width="65" height="24" fill="#8a8a8a" />
<rect x="560" y="512" width="64" height="23" fill="#ffffff" />
<rect x="561" y="513" width="63" height="22" fill="#d9d9d9" />
<text x="578.6" y="527.2" font-size="11.2" fill="#101020" textLength="26.9" lengthAdjust="spacingAndGlyphs" >Open</text>
<rect x="579" y="529" width="9" height="1" fill="#101020" />
<text x="178.8" y="553.9" font-size="11.2" fill="#101020" textLength="64.4" lengthAdjust="spacingAndGlyphs" >Files of type:</text>
<rect x="221" y="555" width="5" height="1" fill="#101020" />
<rect x="248" y="539" width="308" height="23" fill="#8a8a8a" />
<rect x="248" y="539" width="307" height="22" fill="#ffffff" />
<rect x="249" y="540" width="306" height="21" fill="#d9d9d9" />
<text x="259.9" y="552.9" font-size="11.2" fill="#101020" textLength="101.1" lengthAdjust="spacingAndGlyphs" >Symbol files (*.sym)</text>
<rect x="538" y="548" width="11" height="5" fill="#8a8a8a" />
<rect x="538" y="548" width="10" height="4" fill="#ffffff" />
<rect x="539" y="549" width="9" height="3" fill="#d9d9d9" />
<rect x="560" y="539" width="65" height="24" fill="#8a8a8a" />
<rect x="560" y="539" width="64" height="23" fill="#ffffff" />
<rect x="561" y="540" width="63" height="22" fill="#d9d9d9" />
<text x="574.5" y="553.5" font-size="11.2" fill="#101020" textLength="34.8" lengthAdjust="spacingAndGlyphs" >Cancel</text>
<rect x="575" y="555" width="8" height="1" fill="#101020" />
<rect x="4" y="600" width="800" height="19" fill="#ececec" />
<rect x="5" y="601" width="798" height="17" fill="#d9d9d9" />
<text x="6" y="612.6" font-size="10.8" fill="#101020" textLength="29.4" lengthAdjust="spacingAndGlyphs" >SNAP:</text>
<rect x="38" y="601" width="64" height="17" fill="#5aa85a" />
<rect x="39" y="602" width="63" height="16" fill="#98f898" />
<text x="40" y="612.6" font-size="10.8" fill="#101020" textLength="12.8" lengthAdjust="spacingAndGlyphs" >10</text>
<text x="104.8" y="612.6" font-size="10.8" fill="#101020" textLength="29.5" lengthAdjust="spacingAndGlyphs" >GRID:</text>
<rect x="137" y="601" width="64" height="17" fill="#5aa85a" />
<rect x="138" y="602" width="63" height="16" fill="#98f898" />
<text x="139.5" y="612.6" font-size="10.8" fill="#101020" textLength="12.8" lengthAdjust="spacingAndGlyphs" >20</text>
<text x="204" y="612.6" font-size="10.8" fill="#101020" textLength="77.6" lengthAdjust="spacingAndGlyphs" >NETLIST MODE:</text>
<rect x="284" y="601" width="64" height="17" fill="#ffffff" />
<rect x="284" y="601" width="63" height="16" fill="#8a8a8a" />
<rect x="285" y="602" width="62" height="15" fill="#d9d9d9" />
<text x="286" y="612.6" font-size="10.8" fill="#101020" textLength="28.3" lengthAdjust="spacingAndGlyphs" >tedax</text>
<text x="351" y="612.6" font-size="10.8" fill="#101020" textLength="310.5" lengthAdjust="spacingAndGlyphs" xml:space="preserve">mouse = 320 10 - /mnt/x/home/schippes/x/test.sch  selected: 0</text>
</svg>
</body></html>
